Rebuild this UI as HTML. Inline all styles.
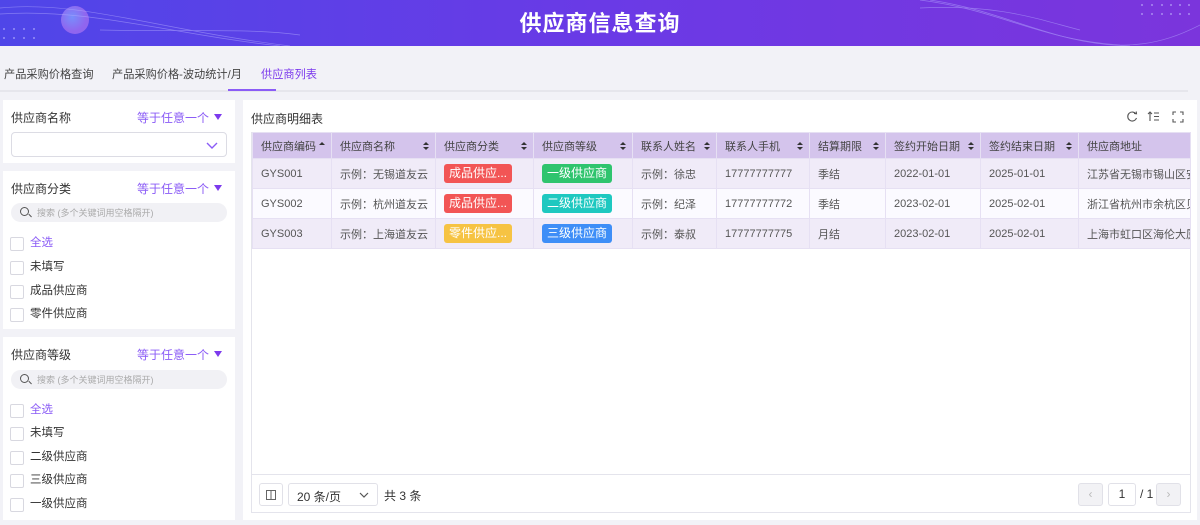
<!DOCTYPE html>
<html><head><meta charset="utf-8"><style>
*{box-sizing:border-box;margin:0;padding:0}
body{width:1200px;height:525px;overflow:hidden;background:#f2f2f7;font-family:"Liberation Sans","Noto Sans CJK SC",sans-serif;font-size:12px;color:#333;position:relative}
.hdr{position:absolute;left:0;top:0;width:1200px;height:46px;background:linear-gradient(90deg,#4f46e8 0%,#6a3ae6 50%,#7b35dc 100%);overflow:hidden}
.hdr h1{position:absolute;left:0;right:0;top:6px;text-align:center;color:#fff;font-size:22px;font-weight:bold;letter-spacing:1px}
.tabs{position:absolute;left:0;top:60px;height:32px;width:1188px;border-bottom:2px solid #e6e6ec}
.tab{position:absolute;top:6px;font-size:11.2px;color:#444}
.panel{position:absolute;background:#fff}
.lbl{position:absolute;left:8px;font-size:12px;color:#333}
.op{position:absolute;right:13px;color:#8b5cf6;font-size:12px}
.op:after{content:"";display:inline-block;margin-left:5px;border:4.5px solid transparent;border-top:6px solid #7c3aed;border-bottom:0;vertical-align:2px}
.sel{position:absolute;left:8px;right:8px;height:25px;border:1px solid #dcdce4;border-radius:4px}
.srch{position:absolute;left:8px;right:8px;height:19px;background:#f1f1f5;border-radius:10px;font-size:9px;color:#aaa;padding:3px 0 0 26px}
.srch:before{content:"";position:absolute;left:9px;top:4px;width:7px;height:7px;border:1.3px solid #555;border-radius:50%}
.srch:after{content:"";position:absolute;left:17px;top:12px;width:4px;height:1.4px;background:#555;transform:rotate(45deg)}
.cb{position:absolute;left:7px;font-size:11.5px;color:#333;padding-left:20px;line-height:13px}
.cb:before{content:"";position:absolute;left:0;top:0;width:12px;height:12px;border:1px solid #d8d8e0;border-radius:2px;background:#fff}
table{position:absolute;left:252px;top:132px;border-collapse:collapse;table-layout:fixed;width:938px}
td,th{border:1px solid #e6e0f3;font-weight:normal;text-align:left;padding:0 8px;white-space:nowrap;overflow:hidden;font-size:11px;color:#555}
th{background:#d4c4ec;height:26px;color:#444;position:relative}
th.s:after{content:"";position:absolute;right:6px;top:9px;border:3px solid transparent;border-bottom:3.5px solid #333;border-top:0}
th.s:before{content:"";position:absolute;right:6px;top:14px;border:3px solid transparent;border-top:3.5px solid #333;border-bottom:0}
td{height:30px}
tr.a td{background:#f0ebf8}
tr.b td{background:#fbfaff}
.tg{display:inline-block;color:#fff;border-radius:3px;padding:0 5px;height:19px;line-height:19px;font-size:12px}
.pg{position:absolute;border:1px solid #e1e1e8;border-radius:3px;background:#fff;font-size:12px}
</style></head><body>
<div class="hdr">
<svg width="1200" height="46" style="position:absolute;left:0;top:0">
<defs><radialGradient id="g" cx="0.4" cy="0.4"><stop offset="0" stop-color="#7f9bff"/><stop offset="1" stop-color="#9b6bf0"/></radialGradient></defs>
<circle cx="75" cy="20" r="14" fill="url(#g)" opacity="0.85"/>
<g fill="#c8c4ff" opacity="0.6"><circle cx="4" cy="29" r="1"/><circle cx="14" cy="29" r="1"/><circle cx="24" cy="29" r="1"/><circle cx="34" cy="29" r="1"/><circle cx="4" cy="38" r="1"/><circle cx="14" cy="38" r="1"/><circle cx="24" cy="38" r="1"/><circle cx="34" cy="38" r="1"/>
<circle cx="1142" cy="5" r="1"/><circle cx="1152" cy="5" r="1"/><circle cx="1162" cy="5" r="1"/><circle cx="1171" cy="5" r="1"/><circle cx="1180" cy="5" r="1"/><circle cx="1189" cy="5" r="1"/><circle cx="1142" cy="14" r="1"/><circle cx="1152" cy="14" r="1"/><circle cx="1162" cy="14" r="1"/><circle cx="1171" cy="14" r="1"/><circle cx="1180" cy="14" r="1"/><circle cx="1189" cy="14" r="1"/></g>
<g fill="none" stroke="#b9b2ff" stroke-width="0.7" opacity="0.5">
<path d="M0 8 C80 0 160 30 290 46"/><path d="M0 14 C90 8 170 34 280 46"/><path d="M100 30 C200 32 250 28 300 35"/><path d="M920 0 C1000 10 1040 40 1120 45 C1160 46 1190 30 1200 25"/><path d="M930 0 C1010 12 1050 44 1130 46"/><path d="M920 8 C1000 4 1040 20 1080 30"/></g>
</svg>
<h1>供应商信息查询</h1></div>
<div class="tabs">
<span class="tab" style="left:4px">产品采购价格查询</span>
<span class="tab" style="left:112px">产品采购价格-波动统计/月</span>
<span class="tab" style="left:261px;color:#7c3aed">供应商列表</span>
<div style="position:absolute;left:228px;top:29px;width:48px;height:2px;background:#8b5cf6"></div>
</div>

<div class="panel" style="left:3px;top:100px;width:232px;height:63px">
<span class="lbl" style="top:9px">供应商名称</span><span class="op" style="top:9px">等于任意一个</span>
<div class="sel" style="top:32px"><svg width="12" height="8" style="position:absolute;right:8px;top:9px"><path d="M1 1 L6 6 L11 1" fill="none" stroke="#8b5cf6" stroke-width="1.4"/></svg></div>
</div>
<div class="panel" style="left:3px;top:171px;width:232px;height:158px">
<span class="lbl" style="top:9px">供应商分类</span><span class="op" style="top:9px">等于任意一个</span>
<div class="srch" style="top:32px">搜索 (多个关键词用空格隔开)</div>
<span class="cb" style="top:66px;color:#8b5cf6">全选</span>
<span class="cb" style="top:90px">未填写</span>
<span class="cb" style="top:114px">成品供应商</span>
<span class="cb" style="top:137px">零件供应商</span>
</div>
<div class="panel" style="left:3px;top:337px;width:232px;height:183px">
<span class="lbl" style="top:9px">供应商等级</span><span class="op" style="top:9px">等于任意一个</span>
<div class="srch" style="top:33px">搜索 (多个关键词用空格隔开)</div>
<span class="cb" style="top:67px;color:#8b5cf6">全选</span>
<span class="cb" style="top:90px">未填写</span>
<span class="cb" style="top:114px">二级供应商</span>
<span class="cb" style="top:137px">三级供应商</span>
<span class="cb" style="top:161px">一级供应商</span>
</div>

<div class="panel" style="left:243px;top:100px;width:954px;height:420px">
<span style="position:absolute;left:8px;top:10px;font-size:12px">供应商明细表</span>
<svg width="60" height="14" style="position:absolute;right:12px;top:10px" fill="none" stroke="#555" stroke-width="1.1">
<path d="M11 4 A4.5 4.5 0 1 0 11.5 8"/><path d="M9 3.5 L11.5 3.8 L11.2 1.5"/>
<path d="M25 11 V2 M23 4 L25 2 L27 4 M29 3 H34 M29 6.5 H34 M29 10 H34"/>
<path d="M48 5 V2 H51 M55 2 H58 V5 M58 9 V12 H55 M51 12 H48 V9"/>
</svg>
<div style="position:absolute;left:8px;right:6px;top:32px;bottom:7px;border:1px solid #e4e4ec"></div>
<div style="position:absolute;left:8px;right:6px;top:374px;height:1px;background:#e4e4ec"></div>
<div class="pg" style="left:16px;top:383px;width:24px;height:23px"><svg width="10" height="10" style="position:absolute;left:6px;top:6px"><rect x="0.5" y="0.5" width="9" height="9" fill="none" stroke="#666"/><path d="M5 1 V9" stroke="#666"/></svg></div>
<div class="pg" style="left:45px;top:383px;width:90px;height:23px;padding:4px 8px">20 条/页<svg width="10" height="7" style="position:absolute;right:8px;top:8px"><path d="M1 1 L5 5 L9 1" fill="none" stroke="#555" stroke-width="1.2"/></svg></div>
<span style="position:absolute;left:141px;top:387px">共 3 条</span>
<div class="pg" style="left:835px;top:383px;width:25px;height:23px;background:#f2f2f5;color:#bbb;text-align:center;line-height:21px">‹</div>
<div class="pg" style="left:865px;top:383px;width:28px;height:23px;text-align:center;line-height:21px">1</div>
<span style="position:absolute;left:897px;top:387px">/ 1</span>
<div class="pg" style="left:913px;top:383px;width:25px;height:23px;background:#f2f2f5;color:#bbb;text-align:center;line-height:21px">›</div>
</div>

<table>
<colgroup><col style="width:79px"><col style="width:104px"><col style="width:98px"><col style="width:99px"><col style="width:84px"><col style="width:93px"><col style="width:76px"><col style="width:95px"><col style="width:98px"><col style="width:112px"></colgroup>
<tr><th style="position:relative">供应商编码<span style="position:absolute;right:6px;top:9px;border:3px solid transparent;border-bottom:3.5px solid #333;border-top:0"></span></th><th class="s">供应商名称</th><th class="s">供应商分类</th><th class="s">供应商等级</th><th class="s">联系人姓名</th><th class="s">联系人手机</th><th class="s">结算期限</th><th class="s">签约开始日期</th><th class="s">签约结束日期</th><th>供应商地址</th></tr>
<tr class="a"><td>GYS001</td><td>示例：无锡道友云</td><td><span class="tg" style="background:#f25555">成品供应...</span></td><td><span class="tg" style="background:#2fc46e">一级供应商</span></td><td>示例：徐忠</td><td>17777777777</td><td>季结</td><td>2022-01-01</td><td>2025-01-01</td><td>江苏省无锡市锡山区安</td></tr>
<tr class="b"><td>GYS002</td><td>示例：杭州道友云</td><td><span class="tg" style="background:#f25555">成品供应...</span></td><td><span class="tg" style="background:#1ec8c0">二级供应商</span></td><td>示例：纪泽</td><td>17777777772</td><td>季结</td><td>2023-02-01</td><td>2025-02-01</td><td>浙江省杭州市余杭区贝</td></tr>
<tr class="a"><td>GYS003</td><td>示例：上海道友云</td><td><span class="tg" style="background:#f6c343">零件供应...</span></td><td><span class="tg" style="background:#3e8ef7">三级供应商</span></td><td>示例：泰叔</td><td>17777777775</td><td>月结</td><td>2023-02-01</td><td>2025-02-01</td><td>上海市虹口区海伦大厦</td></tr>
</table>
</body></html>
